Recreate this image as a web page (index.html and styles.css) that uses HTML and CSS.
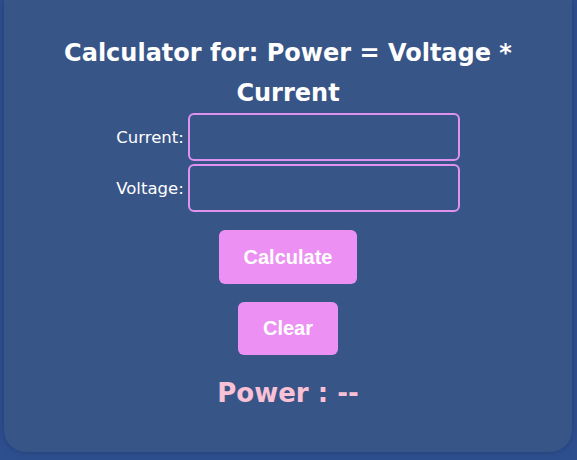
FILE: index.html
```html
<!DOCTYPE html>
<html>
<head>
<meta charset="utf-8">
<link rel="stylesheet" href="styles.css">
</head>
<body>
<div class="card">
  <h1 class="title">Calculator for: Power = Voltage * Current</h1>
  <div class="row"><label class="label">Current:</label><input class="field" type="text"></div>
  <div class="row"><label class="label">Voltage:</label><input class="field" type="text"></div>
  <button class="btn btn-calc">Calculate</button>
  <button class="btn btn-clear">Clear</button>
  <div class="result">Power : --</div>
</div>
</body>
</html>
```
FILE: styles.css
```css
html, body { margin: 0; padding: 0; }
body {
  background: #2e4f8e;
  width: 577px;
  height: 460px;
  overflow: hidden;
  font-family: "DejaVu Sans", "Noto Sans", sans-serif;
}
.card {
  margin: 0 5px 0 4px;
  height: 452px;
  box-sizing: border-box;
  background: #385588;
  border-radius: 0 0 22px 22px;
  box-shadow: 0 0 6px rgba(20, 40, 90, 0.45);
  padding-top: 33px;
  display: flex;
  flex-direction: column;
  align-items: center;
}
.title {
  margin: 0;
  width: 470px;
  text-align: center;
  color: #ffffff;
  font-size: 24px;
  font-weight: bold;
  line-height: 40px;
}
.row {
  display: flex;
  align-items: center;
  margin-top: 0;
}
.row + .row { margin-top: 3px; }
.label {
  color: #ffffff;
  font-size: 16.5px;
  margin-right: 4px;
}
.field {
  width: 272px;
  height: 48px;
  box-sizing: border-box;
  background: transparent;
  border: 2px solid #df92ee;
  border-radius: 6px;
  outline: none;
  color: #fff;
}
.btn {
  background: #ec90f3;
  color: #ffffff;
  border: none;
  border-radius: 6px;
  font-family: "Liberation Sans", Arial, sans-serif;
  font-weight: bold;
  font-size: 20px;
  height: 54px;
  padding: 0;
}
.btn-calc { width: 138px; margin-top: 18px; }
.btn-clear { width: 100px; margin-top: 18px; height: 53px; }
.result {
  margin-top: 18px;
  color: #f8c1d6;
  font-size: 26px;
  font-weight: bold;
  line-height: 40px;
}
```
